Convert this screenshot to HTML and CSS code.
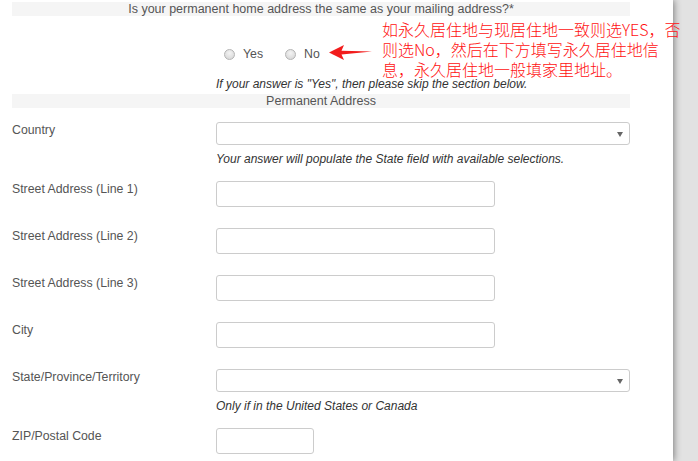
FILE: index.html
```html
<!DOCTYPE html>
<html lang="en">
<head>
  <meta charset="utf-8" />
  <title>Permanent Address</title>
  <link rel="stylesheet" href="styles.css">
</head>
<body>
  <div class="page">
    <div class="form">
      <div class="section-head">Is your permanent home address the same as your mailing address?*</div>

      <div class="row question">
        <div></div>
        <div class="radios">
          <label class="radio"><span class="dot"></span>Yes</label>
          <label class="radio"><span class="dot"></span>No</label>
        </div>
      </div>
      <div class="row help-row">
        <div></div>
        <div class="help">If your answer is "Yes", then please skip the section below.</div>
      </div>

      <div class="section-head second">Permanent Address</div>

      <div class="row field first">
        <label>Country</label>
        <div>
          <div class="select wide"></div>
          <div class="help">Your answer will populate the State field with available selections.</div>
        </div>
      </div>

      <div class="row field">
        <label>Street Address (Line 1)</label>
        <div><div class="input"></div></div>
      </div>

      <div class="row field">
        <label>Street Address (Line 2)</label>
        <div><div class="input"></div></div>
      </div>

      <div class="row field">
        <label>Street Address (Line 3)</label>
        <div><div class="input"></div></div>
      </div>

      <div class="row field">
        <label>City</label>
        <div><div class="input"></div></div>
      </div>

      <div class="row field">
        <label>State/Province/Territory</label>
        <div>
          <div class="select wide"></div>
          <div class="help">Only if in the United States or Canada</div>
        </div>
      </div>

      <div class="row field">
        <label>ZIP/Postal Code</label>
        <div><div class="input short"></div></div>
      </div>
    </div>

    <!-- 標註 -->
    <svg class="arrow" width="46" height="17" viewBox="0 0 46 17">
      <polygon points="0,8.5 15,1 12.5,6.8 43,7.6 12.5,10.4 15,16" fill="#f21c1c" />
    </svg>
    <div class="note">
      <div>如永久居住地与现居住地一致则选YES，否</div>
      <div>则选No，然后在下方填写永久居住地信</div>
      <div>息，永久居住地一般填家里地址。</div>
    </div>
  </div>
</body>
</html>
```

FILE: styles.css
```css
/* 灰色背景 + 白色頁面 */
body {
  margin: 0;
  padding: 0;
  background: #e2e2e2;
  font-family: "Liberation Sans", Arial, sans-serif;
  font-size: 12.3px;
  color: #555;
  overflow: hidden;
}
.page {
  position: relative;
  width: 673px;
  height: 461px;
  background: #fff;
  box-shadow: 1px 0 7px rgba(0, 0, 0, 0.45);
  padding-top: 2px;
  box-sizing: border-box;
}
.form {
  margin-left: 12px;
  width: 618px;
}
.section-head {
  background: #f5f5f5;
  height: 14px;
  line-height: 14px;
  font-size: 12.5px;
  text-align: center;
}
.section-head.second {
  margin-top: 3px;
}
/* 標籤 + 欄位 */
.row {
  display: grid;
  grid-template-columns: 204px 1fr;
}
.row label {
  line-height: 14px;
  padding-top: 1px;
}
.question {
  margin-top: 30px;
}
.radios {
  display: flex;
  gap: 22px;
  padding-left: 8px;
  line-height: 14px;
}
.radio {
  display: flex;
  align-items: center;
  gap: 8px;
}
.dot {
  width: 9px;
  height: 9px;
  border: 1px solid #b4b4b4;
  border-radius: 50%;
  background: radial-gradient(circle at 50% 35%, #f4f4f4, #d2d2d2);
}
.help {
  font-style: italic;
  font-size: 12px;
  color: #333;
  line-height: 14px;
}
.help-row {
  margin-top: 16px;
}
.field {
  margin-top: 21px;
}
.field.first {
  margin-top: 14px;
}
.field .help {
  margin-top: 7px;
}
.row.field:has(.help) + .row.field {
  margin-top: 15px;
}
.input,
.select {
  box-sizing: border-box;
  border: 1px solid #ccc;
  border-radius: 3px;
  background: #fff;
}
.input {
  width: 279px;
  height: 26px;
}
.input.short {
  width: 98px;
}
.select {
  position: relative;
  height: 23px;
}
.select.wide {
  width: 414px;
}
.select::after {
  content: "";
  position: absolute;
  right: 6px;
  top: 9px;
  border-left: 3px solid transparent;
  border-right: 3px solid transparent;
  border-top: 5px solid #666;
}
/* 紅色標註 */
.arrow {
  position: absolute;
  left: 329px;
  top: 44px;
}
.note {
  position: absolute;
  left: 382px;
  top: 21px;
  display: flex;
  flex-direction: column;
  gap: 4px;
  white-space: nowrap;
  font-family: "Noto Sans CJK SC", "Liberation Sans", sans-serif;
  font-size: 16px;
  font-weight: 300;
  line-height: 16px;
  color: #ff1010;
}
```
